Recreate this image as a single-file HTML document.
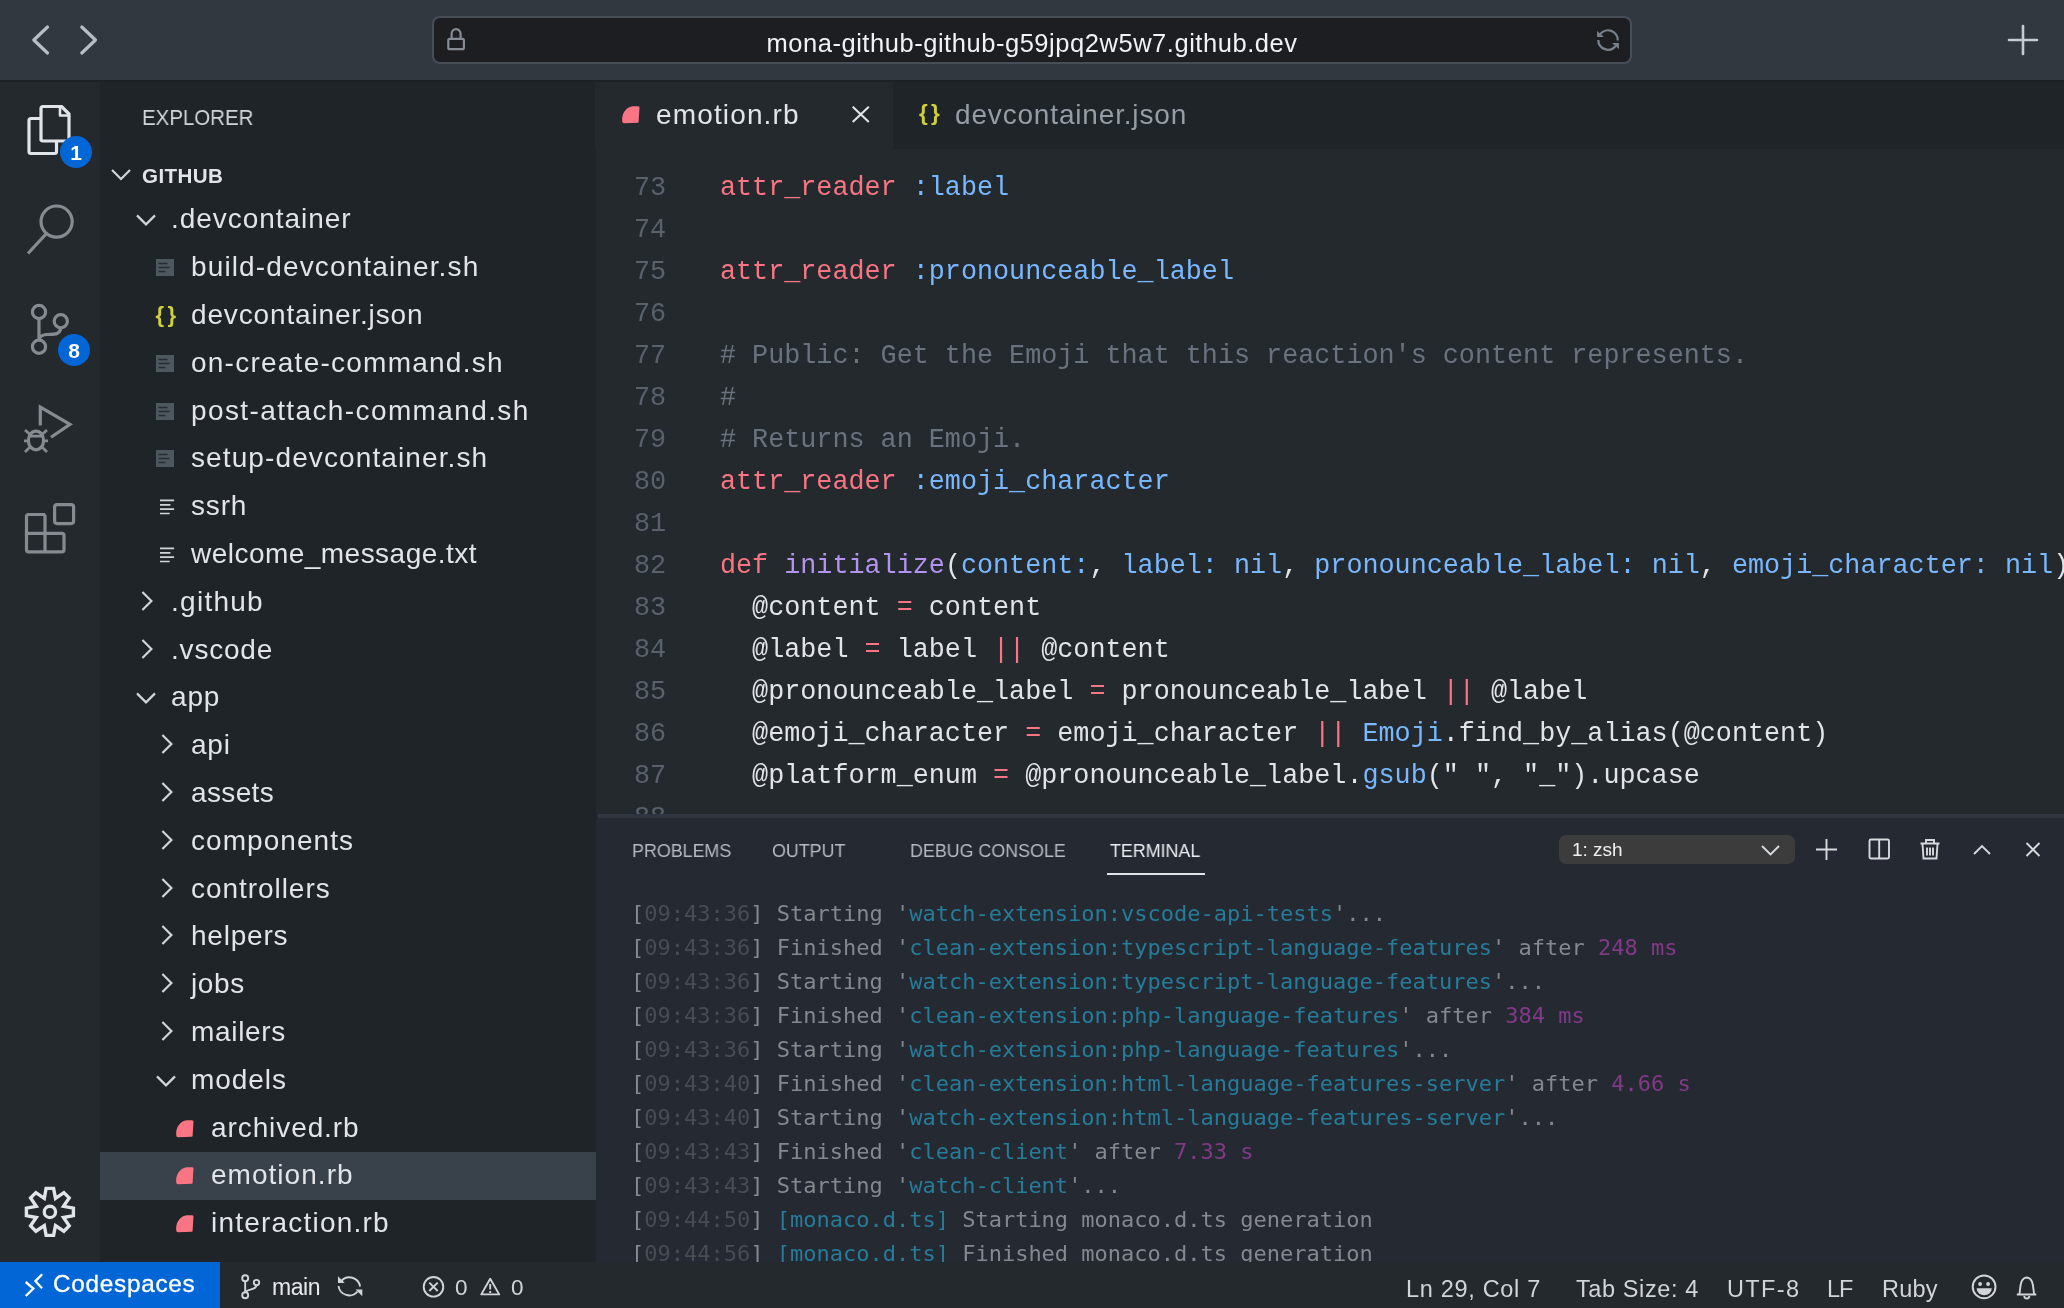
<!DOCTYPE html>
<html lang="en">
<head>
<meta charset="utf-8">
<title>emotion.rb - github - Codespaces</title>
<style>
*{box-sizing:border-box;margin:0;padding:0}
html,body{width:2064px;height:1308px;overflow:hidden;background:#24292e}
body{position:relative;font-family:"Liberation Sans",sans-serif;color:#e1e4e8}
.abs{position:absolute}
.row,.code,.term,.pt,.st,#urltext,.tx,body>div{will-change:transform}
svg{position:absolute;overflow:visible}
#topbar{left:0;top:0;width:2064px;height:80px;background:#32383f}
#url{left:432px;top:16px;width:1200px;height:48px;background:#1c1e22;border:2.2px solid #464e58;border-radius:8px}
#urltext{left:432px;top:18px;width:1200px;height:48px;line-height:50px;text-align:center;font-size:25.5px;letter-spacing:0.54px;color:#f0f2f4}
#activity{left:0;top:80px;width:100px;height:1182px;background:#24292e}
#sidebar{left:100px;top:80px;width:496px;height:1182px;background:#1f2428}
#tabs{left:596px;top:80px;width:1468px;height:69px;background:#1f2428}
#tab1{left:595px;top:80px;width:298.4px;height:69px;background:#24292e}
#shadow{left:0;top:80px;width:2064px;height:1.9px;background:#1d2127}
#editor{left:596px;top:149px;width:1468px;height:665px;background:#24292e;overflow:hidden}
#panelborder{left:598px;top:814px;width:1466px;height:4.100px;background:#30363f}
#panel{left:596px;top:818px;width:1468px;height:443.700px;background:#242932;overflow:hidden}
#status{left:0;top:1262px;width:2064px;height:46px;background:#24292e}
#remote{left:0;top:1262px;width:220px;height:46px;background:#0366d6}
.row{position:absolute;left:100px;width:496px;height:48px;line-height:48px;font-size:28px;color:#e1e4e8;white-space:nowrap}
.row span{position:absolute;top:0}
.sel{}
.sel::before{content:"";position:absolute;left:0;top:1.7px;width:496px;height:47.9px;background:#39414a}
.code{position:absolute;left:0;width:1468px;height:42px;line-height:42px;font-family:"Liberation Mono",monospace;font-size:26.77px;white-space:pre;color:#e1e4e8}
.ln{position:absolute;left:0;width:70px;text-align:right;color:#59616b}
.cd{position:absolute;left:124px}
.k{color:#f97583}.c{color:#79b8ff}.f{color:#b392f0}.m{color:#6a737d}.s{color:#9ecbff}
.term{position:absolute;left:34.7px;height:34px;line-height:34px;font-family:"DejaVu Sans Mono","Liberation Mono",monospace;font-size:22px;white-space:pre;color:#85898d}
.d{color:#494d51}.cy{color:#267c99}.mg{color:#823a87}
.pt{position:absolute;top:839px;font-size:19px;color:#b7bbc0;line-height:24px;transform:scaleX(0.94);transform-origin:0 0;white-space:nowrap}
.st{position:absolute;top:1262px;height:46px;line-height:50px;font-size:23.5px;color:#d1d5da;white-space:nowrap}
</style>
</head>
<body>
<div id="topbar" class="abs"></div>
<div id="url" class="abs"></div>
<div id="urltext" class="abs">mona-github-github-g59jpq2w5w7.github.dev</div>
<div id="activity" class="abs"></div>
<div id="sidebar" class="abs"></div>
<div id="tabs" class="abs"></div>
<div id="tab1" class="abs"></div>
<div id="shadow" class="abs"></div>
<div id="editor" class="abs">
<!--CODE-->
<div class="code" style="top:17.5px"><span class="ln">73</span><span class="cd"><span class="k">attr_reader</span> <span class="c">:label</span></span></div>
<div class="code" style="top:59.5px"><span class="ln">74</span><span class="cd"></span></div>
<div class="code" style="top:101.5px"><span class="ln">75</span><span class="cd"><span class="k">attr_reader</span> <span class="c">:pronounceable_label</span></span></div>
<div class="code" style="top:143.5px"><span class="ln">76</span><span class="cd"></span></div>
<div class="code" style="top:185.5px"><span class="ln">77</span><span class="cd"><span class="m"># Public: Get the Emoji that this reaction's content represents.</span></span></div>
<div class="code" style="top:227.5px"><span class="ln">78</span><span class="cd"><span class="m">#</span></span></div>
<div class="code" style="top:269.5px"><span class="ln">79</span><span class="cd"><span class="m"># Returns an Emoji.</span></span></div>
<div class="code" style="top:311.5px"><span class="ln">80</span><span class="cd"><span class="k">attr_reader</span> <span class="c">:emoji_character</span></span></div>
<div class="code" style="top:353.5px"><span class="ln">81</span><span class="cd"></span></div>
<div class="code" style="top:395.5px"><span class="ln">82</span><span class="cd"><span class="k">def</span> <span class="f">initialize</span>(<span class="c">content:</span>, <span class="c">label:</span> <span class="c">nil</span>, <span class="c">pronounceable_label:</span> <span class="c">nil</span>, <span class="c">emoji_character:</span> <span class="c">nil</span>)</span></div>
<div class="code" style="top:437.5px"><span class="ln">83</span><span class="cd">  @content <span class="k">=</span> content</span></div>
<div class="code" style="top:479.5px"><span class="ln">84</span><span class="cd">  @label <span class="k">=</span> label <span class="k">||</span> @content</span></div>
<div class="code" style="top:521.5px"><span class="ln">85</span><span class="cd">  @pronounceable_label <span class="k">=</span> pronounceable_label <span class="k">||</span> @label</span></div>
<div class="code" style="top:563.5px"><span class="ln">86</span><span class="cd">  @emoji_character <span class="k">=</span> emoji_character <span class="k">||</span> <span class="c">Emoji</span>.find_by_alias(@content)</span></div>
<div class="code" style="top:605.5px"><span class="ln">87</span><span class="cd">  @platform_enum <span class="k">=</span> @pronounceable_label.<span class="c">gsub</span>(" ", "_").upcase</span></div>
<div class="code" style="top:647.5px"><span class="ln">88</span><span class="cd"></span></div>
<!--/CODE-->
</div>
<div id="panelborder" class="abs"></div>
<div id="panel" class="abs">
<!--TERM-->
<div class="term" style="top:78.5px">[<span class="d">09:43:36</span>] Starting '<span class="cy">watch-extension:vscode-api-tests</span>'...</div>
<div class="term" style="top:112.5px">[<span class="d">09:43:36</span>] Finished '<span class="cy">clean-extension:typescript-language-features</span>' after <span class="mg">248 ms</span></div>
<div class="term" style="top:146.5px">[<span class="d">09:43:36</span>] Starting '<span class="cy">watch-extension:typescript-language-features</span>'...</div>
<div class="term" style="top:180.5px">[<span class="d">09:43:36</span>] Finished '<span class="cy">clean-extension:php-language-features</span>' after <span class="mg">384 ms</span></div>
<div class="term" style="top:214.5px">[<span class="d">09:43:36</span>] Starting '<span class="cy">watch-extension:php-language-features</span>'...</div>
<div class="term" style="top:248.5px">[<span class="d">09:43:40</span>] Finished '<span class="cy">clean-extension:html-language-features-server</span>' after <span class="mg">4.66 s</span></div>
<div class="term" style="top:282.5px">[<span class="d">09:43:40</span>] Starting '<span class="cy">watch-extension:html-language-features-server</span>'...</div>
<div class="term" style="top:316.5px">[<span class="d">09:43:43</span>] Finished '<span class="cy">clean-client</span>' after <span class="mg">7.33 s</span></div>
<div class="term" style="top:350.5px">[<span class="d">09:43:43</span>] Starting '<span class="cy">watch-client</span>'...</div>
<div class="term" style="top:384.5px">[<span class="d">09:44:50</span>] <span class="cy">[monaco.d.ts]</span> Starting monaco.d.ts generation</div>
<div class="term" style="top:418.5px">[<span class="d">09:44:56</span>] <span class="cy">[monaco.d.ts]</span> Finished monaco.d.ts generation</div>
<!--/TERM-->
</div>
<div id="status" class="abs"></div>
<div id="remote" class="abs"></div>
<!--TREE-->
<div class="row" style="top:194.3px"><svg style="left:34.25px;top:12.500px" width="24" height="24" viewBox="0 0 24 24"><path d="M3 8.400 L12 17.400 L21 8.400" fill="none" stroke="#d1d5da" stroke-width="2.200"/></svg><span style="left:71px;top:1px;letter-spacing:0.96px">.devcontainer</span></div>
<div class="row" style="top:242.1px"><svg style="left:56px;top:16.5px" width="18" height="17" viewBox="0 0 18 17"><rect x="0" y="0" width="18" height="17" fill="#4d585e"/><path d="M2.5 4.5h9M2.5 8.500h11M2.500 12.500h7" stroke="#262c31" stroke-width="1.500"/></svg><span style="left:91px;top:1px;letter-spacing:1.13px">build-devcontainer.sh</span></div>
<div class="row" style="top:289.9px"><span style="left:55.5px;top:0.5px;font-size:22px;font-weight:bold;color:#d0d03f;letter-spacing:3.500px">{}</span><span style="left:91px;top:1px;letter-spacing:0.85px">devcontainer.json</span></div>
<div class="row" style="top:337.7px"><svg style="left:56px;top:16.5px" width="18" height="17" viewBox="0 0 18 17"><rect x="0" y="0" width="18" height="17" fill="#4d585e"/><path d="M2.5 4.5h9M2.5 8.500h11M2.500 12.500h7" stroke="#262c31" stroke-width="1.500"/></svg><span style="left:91px;top:1px;letter-spacing:1.24px">on-create-command.sh</span></div>
<div class="row" style="top:385.5px"><svg style="left:56px;top:16.5px" width="18" height="17" viewBox="0 0 18 17"><rect x="0" y="0" width="18" height="17" fill="#4d585e"/><path d="M2.5 4.5h9M2.5 8.500h11M2.500 12.500h7" stroke="#262c31" stroke-width="1.500"/></svg><span style="left:91px;top:1px;letter-spacing:1.39px">post-attach-command.sh</span></div>
<div class="row" style="top:433.3px"><svg style="left:56px;top:16.5px" width="18" height="17" viewBox="0 0 18 17"><rect x="0" y="0" width="18" height="17" fill="#4d585e"/><path d="M2.5 4.5h9M2.5 8.500h11M2.500 12.500h7" stroke="#262c31" stroke-width="1.500"/></svg><span style="left:91px;top:1px;letter-spacing:1.11px">setup-devcontainer.sh</span></div>
<div class="row" style="top:481.1px"><svg style="left:59.8px;top:17px" width="16" height="18" viewBox="0 0 16 18"><path d="M0 2.300h14.100M0 6.800h10.400M0 11.200h14.100M0 15.500h9.700" stroke="#d1d5da" stroke-width="1.700" fill="none"/></svg><span style="left:91px;top:1px;letter-spacing:0.83px">ssrh</span></div>
<div class="row" style="top:528.9px"><svg style="left:59.8px;top:17px" width="16" height="18" viewBox="0 0 16 18"><path d="M0 2.300h14.100M0 6.800h10.400M0 11.200h14.100M0 15.500h9.700" stroke="#d1d5da" stroke-width="1.700" fill="none"/></svg><span style="left:91px;top:1px;letter-spacing:0.47px">welcome_message.txt</span></div>
<div class="row" style="top:576.7px"><svg style="left:33.6px;top:12.400px" width="24" height="24" viewBox="0 0 24 24"><path d="M8.400 3 L17.400 12 L8.400 21" fill="none" stroke="#d1d5da" stroke-width="2.200"/></svg><span style="left:71px;top:1px;letter-spacing:1.27px">.github</span></div>
<div class="row" style="top:624.5px"><svg style="left:33.6px;top:12.400px" width="24" height="24" viewBox="0 0 24 24"><path d="M8.400 3 L17.400 12 L8.400 21" fill="none" stroke="#d1d5da" stroke-width="2.200"/></svg><span style="left:71px;top:1px;letter-spacing:0.8px">.vscode</span></div>
<div class="row" style="top:672.3px"><svg style="left:34.25px;top:12.500px" width="24" height="24" viewBox="0 0 24 24"><path d="M3 8.400 L12 17.400 L21 8.400" fill="none" stroke="#d1d5da" stroke-width="2.200"/></svg><span style="left:71px;top:1px;letter-spacing:0.85px">app</span></div>
<div class="row" style="top:720.1px"><svg style="left:53.6px;top:12.400px" width="24" height="24" viewBox="0 0 24 24"><path d="M8.400 3 L17.400 12 L8.400 21" fill="none" stroke="#d1d5da" stroke-width="2.200"/></svg><span style="left:91px;top:1px;letter-spacing:0.75px">api</span></div>
<div class="row" style="top:767.9px"><svg style="left:53.6px;top:12.400px" width="24" height="24" viewBox="0 0 24 24"><path d="M8.400 3 L17.400 12 L8.400 21" fill="none" stroke="#d1d5da" stroke-width="2.200"/></svg><span style="left:91px;top:1px;letter-spacing:0.36px">assets</span></div>
<div class="row" style="top:815.7px"><svg style="left:53.6px;top:12.400px" width="24" height="24" viewBox="0 0 24 24"><path d="M8.400 3 L17.400 12 L8.400 21" fill="none" stroke="#d1d5da" stroke-width="2.200"/></svg><span style="left:91px;top:1px;letter-spacing:1.06px">components</span></div>
<div class="row" style="top:863.5px"><svg style="left:53.6px;top:12.400px" width="24" height="24" viewBox="0 0 24 24"><path d="M8.400 3 L17.400 12 L8.400 21" fill="none" stroke="#d1d5da" stroke-width="2.200"/></svg><span style="left:91px;top:1px;letter-spacing:0.95px">controllers</span></div>
<div class="row" style="top:911.3px"><svg style="left:53.6px;top:12.400px" width="24" height="24" viewBox="0 0 24 24"><path d="M8.400 3 L17.400 12 L8.400 21" fill="none" stroke="#d1d5da" stroke-width="2.200"/></svg><span style="left:91px;top:1px;letter-spacing:0.78px">helpers</span></div>
<div class="row" style="top:959.1px"><svg style="left:53.6px;top:12.400px" width="24" height="24" viewBox="0 0 24 24"><path d="M8.400 3 L17.400 12 L8.400 21" fill="none" stroke="#d1d5da" stroke-width="2.200"/></svg><span style="left:91px;top:1px;letter-spacing:0.6px">jobs</span></div>
<div class="row" style="top:1006.9px"><svg style="left:53.6px;top:12.400px" width="24" height="24" viewBox="0 0 24 24"><path d="M8.400 3 L17.400 12 L8.400 21" fill="none" stroke="#d1d5da" stroke-width="2.200"/></svg><span style="left:91px;top:1px;letter-spacing:0.67px">mailers</span></div>
<div class="row" style="top:1054.7px"><svg style="left:54.25px;top:12.500px" width="24" height="24" viewBox="0 0 24 24"><path d="M3 8.400 L12 17.400 L21 8.400" fill="none" stroke="#d1d5da" stroke-width="2.200"/></svg><span style="left:91px;top:1px;letter-spacing:0.94px">models</span></div>
<div class="row" style="top:1102.5px"><svg style="left:75.7px;top:17.2px" width="18" height="18" viewBox="0 0 18 18"><path d="M10.700 0.300 L16.200 0.150 Q17.600 0.200 17.500 1.600 L16.600 16 Q16.500 16.600 15.800 16.700 L2 17.300 Q0.300 17.300 0.200 15.300 L0.150 12.800 C0.500 6 5 1 10.700 0.300 Z" fill="#f97583"/></svg><span style="left:111px;top:1px;letter-spacing:0.91px">archived.rb</span></div>
<div class="row sel" style="top:1150.3px"><svg style="left:75.7px;top:17.2px" width="18" height="18" viewBox="0 0 18 18"><path d="M10.700 0.300 L16.200 0.150 Q17.600 0.200 17.500 1.600 L16.600 16 Q16.500 16.600 15.800 16.700 L2 17.300 Q0.300 17.300 0.200 15.300 L0.150 12.800 C0.500 6 5 1 10.700 0.300 Z" fill="#f97583"/></svg><span style="left:111px;top:1px;letter-spacing:1.03px">emotion.rb</span></div>
<div class="row" style="top:1198.1px"><svg style="left:75.7px;top:17.2px" width="18" height="18" viewBox="0 0 18 18"><path d="M10.700 0.300 L16.200 0.150 Q17.600 0.200 17.500 1.600 L16.600 16 Q16.500 16.600 15.800 16.700 L2 17.300 Q0.300 17.300 0.200 15.300 L0.150 12.800 C0.500 6 5 1 10.700 0.300 Z" fill="#f97583"/></svg><span style="left:111px;top:1px;letter-spacing:1.21px">interaction.rb</span></div>
<!--/TREE-->
<!--MISC-->
<!-- browser chrome -->
<svg style="left:0;top:0" width="2064" height="80" viewBox="0 0 2064 80">
<g fill="none" stroke="#b9bec5" stroke-width="3.2" stroke-linecap="round" stroke-linejoin="round">
<path d="M47.5 27 L33.8 40 L47.5 53"/>
<path d="M81.8 27 L95.5 40 L81.8 53"/>
</g>
<g fill="none" stroke="#c8ccd1" stroke-width="2.6" stroke-linecap="round">
<path d="M2009 40 H2037 M2023 26 V54"/>
</g>
<g fill="none" stroke="#858c94" stroke-width="2.2" stroke-linejoin="round">
<rect x="448.3" y="38.8" width="15.6" height="10.4" rx="1.5"/>
<path d="M451.6 38.8 V34 A4.5 4.8 0 0 1 460.6 34 V38.8"/>
</g>
<g fill="none" stroke="#79818c" stroke-width="2.3">
<path d="M1600.2 34.3 A9.7 9.7 0 0 1 1617.7 40.5"/>
<path d="M1598.3 40 A9.7 9.7 0 0 0 1615.6 46"/>
</g>
<path d="M1597.1 31 V37.1 H1604 Z M1618.9 49 V42.9 H1612 Z" fill="#79818c"/>
</svg>

<!-- activity bar icons -->
<svg style="left:0;top:80px" width="100" height="1182" viewBox="0 80 100 1182">
<g fill="none" stroke="#e1e4e8" stroke-width="3.2" stroke-linejoin="round">
<path d="M41 141 V108.5 a2 2 0 0 1 2 -2 H61.5 L69 114 V139 a2 2 0 0 1 -2 2 H43 a2 2 0 0 1 -2 -2"/>
<path d="M60 107 V115.5 H68.5" stroke-width="2.6"/>
<path d="M41 118.5 H31 a2 2 0 0 0 -2 2 V151.5 a2 2 0 0 0 2 2 H54.5 a2 2 0 0 0 2 -2 V141"/>
</g>
<g fill="none" stroke="#868b91" stroke-width="3.2">
<circle cx="56.6" cy="221.6" r="15.6"/>
<path d="M46.3 233.6 L28 253.5"/>
<circle cx="39" cy="312" r="6.6"/>
<circle cx="60.8" cy="321.3" r="6.6"/>
<circle cx="39" cy="346.7" r="6.6"/>
<path d="M39 318.6 V340.1 M60.8 327.9 C60 335.5 53 334 46 334.5 C41.5 335 39.5 337.5 39 340"/>
<path d="M40.3 425.5 V407 L70 424.3 L51 437.3" stroke-linejoin="miter"/>
<ellipse cx="36" cy="440.5" rx="7.6" ry="9.3"/>
<path d="M28.5 436.2 H43.5 M24 440.8 H28.4 M43.6 440.8 H48 M29.5 434 L25 430 M42.5 434 L47 430 M29.5 447.5 L25 452 M42.5 447.5 L47 452" stroke-width="2.8"/>
<path d="M45 514.5 H28.5 a2 2 0 0 0 -2 2 V549.8 a2 2 0 0 0 2 2 H62 a2 2 0 0 0 2 -2 V535.3 a2 2 0 0 0 -2 -2 H45 V516.5 a2 2 0 0 0 -2 -2 M26.5 533.3 H45 V551.8" stroke-linejoin="round"/>
<rect x="54.6" y="504.6" width="19" height="19" rx="2.5"/>
</g>
<circle cx="76" cy="152" r="16" fill="#0366d6"/>
<circle cx="74" cy="350" r="16" fill="#0366d6"/>
<g fill="none" stroke="#e1e4e8" stroke-width="3.4" stroke-linejoin="miter">
<path d="M46.1 1188.4 L53.6 1188.4 L55.5 1198.3 L63.9 1192.6 L69.2 1197.9 L63.5 1206.3 L73.4 1208.2 L73.4 1215.7 L63.5 1217.5 L69.2 1225.9 L63.9 1231.2 L55.5 1225.5 L53.6 1235.4 L46.1 1235.4 L44.3 1225.5 L35.9 1231.2 L30.6 1225.9 L36.3 1217.5 L26.4 1215.7 L26.4 1208.2 L36.3 1206.3 L30.6 1197.9 L35.9 1192.6 L44.3 1198.3Z"/>
<circle cx="49.9" cy="1211.9" r="5.65" stroke-width="3.3"/>
</g>
</svg>
<div class="abs" style="left:60px;top:136px;width:32px;height:32px;line-height:33px;text-align:center;font-size:21px;font-weight:bold;color:#fff">1</div>
<div class="abs" style="left:58px;top:334px;width:32px;height:32px;line-height:33px;text-align:center;font-size:21px;font-weight:bold;color:#fff">8</div>

<!-- explorer header -->
<div class="abs" style="left:142px;top:104.5px;height:26px;line-height:26px;font-size:22.6px;transform:scaleX(0.905);transform-origin:0 0;color:#d1d5da">EXPLORER</div>
<svg style="left:109px;top:162.300px" width="24" height="24" viewBox="0 0 24 24"><path d="M3 8 L12 17 L21 8" fill="none" stroke="#d1d5da" stroke-width="2.200"/></svg>
<div class="abs" style="left:142px;top:162.500px;height:26px;line-height:26px;font-size:20.6px;letter-spacing:0.4px;font-weight:bold;color:#e1e4e8">GITHUB</div>

<!-- tabs -->
<svg style="left:621.800px;top:105.600px" width="18" height="18" viewBox="0 0 18 18"><path d="M10.700 0.300 L16.200 0.150 Q17.600 0.200 17.500 1.600 L16.600 16 Q16.500 16.600 15.800 16.700 L2 17.300 Q0.300 17.300 0.200 15.300 L0.150 12.800 C0.500 6 5 1 10.700 0.300 Z" fill="#f97583"/></svg>
<div class="abs" style="left:656px;top:96.500px;height:36px;line-height:36px;font-size:28px;letter-spacing:1.14px;color:#e1e4e8">emotion.rb</div>
<svg style="left:850px;top:104px" width="20" height="20" viewBox="0 0 20 20"><path d="M2.700 2.800 L18.800 18 M18.800 2.800 L2.700 18" stroke="#e1e4e8" stroke-width="2.100" fill="none"/></svg>
<div class="abs" style="left:919px;top:95.500px;height:36px;line-height:34px;font-size:22.500px;font-weight:bold;color:#d0d03f;letter-spacing:3.200px">{}</div>
<div class="abs" style="left:954.500px;top:96.500px;height:36px;line-height:36px;font-size:28px;letter-spacing:0.83px;color:#959da5">devcontainer.json</div>

<!-- panel header -->
<div class="pt" style="left:631.500px">PROBLEMS</div>
<div class="pt" style="left:772px">OUTPUT</div>
<div class="pt" style="left:910px">DEBUG CONSOLE</div>
<div class="pt" style="left:1109.500px;color:#e9ecef">TERMINAL</div>
<div class="abs" style="left:1107px;top:873px;width:98px;height:2.300px;background:#e1e4e8"></div>
<div class="abs" style="left:1559px;top:835px;width:236px;height:29px;background:#3c3c3c;border-radius:7px"></div>
<div class="abs" style="left:1572px;top:836px;height:28px;line-height:28px;font-size:19px;color:#f0f0f0">1: zsh</div>
<svg style="left:1500px;top:820px" width="564" height="60" viewBox="1500 820 564 60">
<g fill="none" stroke="#d7dadd" stroke-width="1.9">
<path d="M1762 846 L1770.500 854.500 L1779 846"/>
<path d="M1816 849.500 H1837 M1826.500 839 V860"/>
<rect x="1869.500" y="839.500" width="19.500" height="19" rx="1.500"/><path d="M1879.200 839.500 V858.500"/>
<path d="M1920.500 843.500 H1939.500 M1926 843 V840 H1934 V843 M1922.500 844 L1923.500 858.500 H1936.500 L1937.500 844 M1927 847.500 V855.500 M1930 847.500 V855.500 M1933 847.500 V855.500"/>
<path d="M1974 854 L1982 846 L1990 854"/>
<path d="M2026.500 843 L2039.500 856 M2039.500 843 L2026.500 856"/>
</g>
</svg>

<!-- status bar -->
<svg style="left:0;top:1262px" width="2064" height="46" viewBox="0 1262 2064 46">
<g fill="none" stroke="#fff" stroke-width="2.3">
<path d="M25.7 1282 L33.4 1288.500 L25.700 1296"/>
<path d="M42.200 1274.200 L35.400 1281.100 L42 1288.200"/>
</g>
<g fill="none" stroke="#d1d5da" stroke-width="1.900">
<circle cx="245.200" cy="1278.300" r="3"/><circle cx="256.500" cy="1282.600" r="2.700"/><circle cx="245.200" cy="1295.300" r="3"/>
<path d="M245.200 1281.300 V1292.300 M256.500 1285.300 C256 1290 249 1288.500 245.500 1292"/>
<path d="M341.300 1281 A10.800 10.800 0 0 1 360.100 1286.500"/>
<path d="M338.500 1286 A10.800 10.800 0 0 0 357.500 1291.500"/>
<circle cx="433.500" cy="1286.800" r="9.800"/>
<path d="M429.300 1282.600 L437.700 1291 M437.700 1282.600 L429.300 1291"/>
<path d="M490.200 1278.800 L481.300 1294.400 H499.200 Z" stroke-linejoin="round"/>
<path d="M490.200 1284 V1289.500 M490.200 1291 V1293"/>
<circle cx="1984.100" cy="1286.800" r="11.400" stroke-width="2"/>
<path d="M2016.800 1294.500 H2036.300 M2019.400 1294.500 C2020.500 1289 2019.500 1278 2026.800 1277.500 C2034 1278 2033 1289 2034.200 1294.500 M2024.300 1296 A2.500 2.500 0 0 0 2029.300 1296"/>
</g>
<g fill="#d1d5da">
<path d="M338 1276.300 V1283 H344.700 Z M362.300 1296.300 V1289.600 H355.600 Z"/>
<circle cx="1980.100" cy="1284" r="1.900"/><circle cx="1988.100" cy="1284" r="1.900"/>
<path d="M1976.600 1288.200 H1991.800 A7.600 7 0 0 1 1976.600 1288.200 Z"/>
</g>
</svg>
<div class="st" id="s1" style="left:52.5px;color:#fff;-webkit-text-stroke:0.3px #fff;font-size:24.3px;top:1259.200px;letter-spacing:0.74px">Codespaces</div>
<div class="st" id="s2" style="left:271.5px;font-size:23px;top:1261.500px;letter-spacing:-0.45px;color:#e6e8eb">main</div>
<div class="st" id="s3" style="left:454.5px;font-size:22.5px;top:1262.500px">0</div>
<div class="st" id="s4" style="left:510.5px;font-size:22.5px;top:1262.500px">0</div>
<div class="st" id="s5" style="left:1406px;top:1264px;letter-spacing:0.69px">Ln 29, Col 7</div>
<div class="st" id="s6" style="left:1576px;top:1264px;letter-spacing:0.6px">Tab Size: 4</div>
<div class="st" id="s7" style="left:1726.5px;top:1264px;letter-spacing:1.37px">UTF-8</div>
<div class="st" id="s8" style="left:1826.5px;top:1264px;letter-spacing:-1px">LF</div>
<div class="st" id="s9" style="left:1881.5px;top:1264px;letter-spacing:0.2px">Ruby</div>

<!--/MISC-->
</body>
</html>
